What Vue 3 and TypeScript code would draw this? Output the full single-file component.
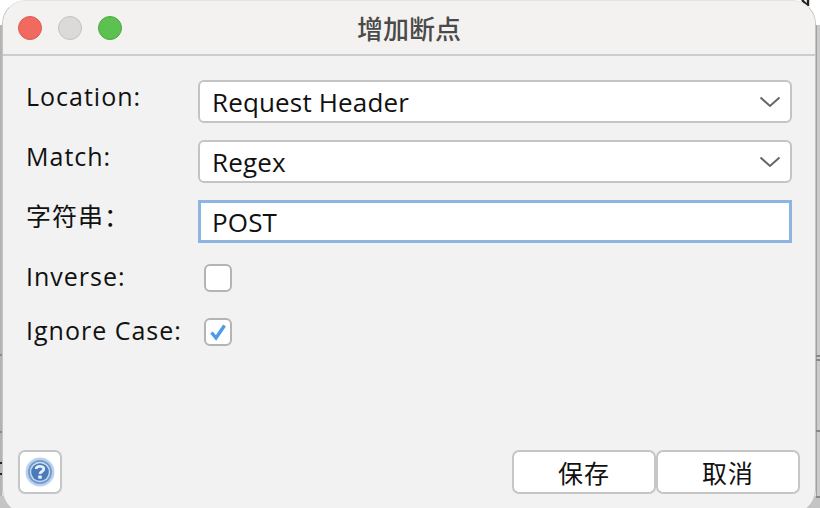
<script setup lang="ts">
const selects = [
  { label: 'Location:', value: 'Request Header' },
  { label: 'Match:', value: 'Regex' },
]
</script>

<template>
  <div class="page">
    <svg class="peek" width="20" height="8" viewBox="0 0 20 8">
      <path d="M2 0 L7 5 M8 0 L8 6" fill="none" stroke="#222" stroke-width="2.4" />
    </svg>
    <div class="window">
      <header class="titlebar">
        <div class="lights">
          <span class="light red"></span>
          <span class="light grey"></span>
          <span class="light green"></span>
        </div>
        <div class="title">增加断点</div>
      </header>
      <main class="body">
        <div class="form">
          <div v-for="s in selects" :key="s.label" class="row">
            <label class="label">{{ s.label }}</label>
            <div class="select">
              <span>{{ s.value }}</span>
              <svg class="chev" width="22" height="12" viewBox="0 0 22 12">
                <path d="M1.5 1.5 L11 10 L20.5 1.5" fill="none" stroke="#666" stroke-width="2" />
              </svg>
            </div>
          </div>
          <div class="row">
            <label class="label">字符串：</label>
            <div class="input">POST</div>
          </div>
          <div class="row check-row first">
            <label class="label">Inverse:</label>
            <span class="check"></span>
          </div>
          <div class="row check-row second">
            <label class="label">Ignore Case:</label>
            <span class="check">
              <svg width="20" height="18" viewBox="0 0 20 18">
                <path d="M3.5 9.5 L8 15 L16.5 2.5" fill="none" stroke="#4a9be8" stroke-width="3.4" />
              </svg>
            </span>
          </div>
        </div>
        <footer class="footer">
          <button class="help" type="button" aria-label="help">
            <svg width="32" height="32" viewBox="0 0 32 32">
              <circle cx="16" cy="16" r="14.5" fill="#bcd2ec" />
              <circle cx="16" cy="16" r="12" fill="#6f9bd0" />
              <circle cx="16" cy="16" r="10.2" fill="#c9dbf0" />
              <circle cx="16" cy="16" r="8.8" fill="#4a7ab8" />
              <path d="M12.2 13 C12.2 9.5 19.8 9.5 19.8 13 C19.8 15.5 16 15.5 16 18" fill="none" stroke="#e6eef8" stroke-width="2.8" />
              <rect x="14.2" y="19.5" width="3.6" height="3.2" fill="#e6eef8" />
            </svg>
          </button>
          <div class="actions">
            <button class="btn" type="button">保存</button>
            <button class="btn" type="button">取消</button>
          </div>
        </footer>
      </main>
    </div>
  </div>
</template>

<style>
html, body { margin: 0; padding: 0; background: #ffffff; }
</style>

<style scoped>
.page {
  position: relative;
  width: 820px;
  height: 508px;
  overflow: hidden;
  background:
    linear-gradient(#222, #222) 0 462px / 3px 2px no-repeat,
    linear-gradient(#222, #222) 0 473px / 3px 2px no-repeat,
    linear-gradient(#8a8a8a, #8a8a8a) 0 354px / 3px 2px no-repeat,
    linear-gradient(#8a8a8a, #8a8a8a) 0 431px / 3px 2px no-repeat,
    linear-gradient(#888, #888) 816px 355px / 4px 2px no-repeat,
    linear-gradient(#888, #888) 816px 359px / 4px 2px no-repeat,
    linear-gradient(#888, #888) 816px 430px / 4px 2px no-repeat,
    linear-gradient(#888, #888) 816px 496px / 4px 2px no-repeat,
    linear-gradient(#c4c4c4, #c4c4c4) 0 496px / 820px 12px no-repeat,
    linear-gradient(90deg, #a0a0a0 1px, #cbcbcb 1px) 816px 25px / 4px 483px no-repeat,
    linear-gradient(#b4b4b4, #b4b4b4) 0 25px / 2px 483px no-repeat,
    #fff;
  font-family: "Open Sans", "Noto Sans", "Noto Sans CJK SC", sans-serif;
  color: #111;
}
.peek {
  position: absolute;
  right: 0;
  top: 0;
}
.window {
  position: relative;
  box-sizing: border-box;
  width: 814px;
  height: 514px;
  margin-left: 2px;
  border: 1px solid #c4c4c4;
  border-top-color: #e2e2e2;
  border-radius: 24px;
  background: #f2f2f2;
  overflow: hidden;
  display: flex;
  flex-direction: column;
}
.titlebar {
  position: relative;
  flex: none;
  height: 55px;
  box-sizing: border-box;
  background: #f3f2f1;
  border-bottom: 2px solid #cdcdcd;
  display: flex;
  align-items: center;
  justify-content: center;
}
.lights {
  position: absolute;
  left: 15px;
  top: 15px;
  display: flex;
  gap: 16px;
}
.light {
  box-sizing: border-box;
  width: 24px;
  height: 24px;
  border-radius: 50%;
  border: 1px solid;
}
.red { background: #f16a60; border-color: #de5a50; }
.grey { background: #dbdad8; border-color: #c2c1bf; }
.green { background: #5cc150; border-color: #4aa942; }
.title {
  font-size: 26px;
  line-height: 1;
  font-weight: 500;
  color: #4a4a4a;
  font-family: "Noto Sans CJK SC", sans-serif;
}
.body {
  flex: 1;
  display: flex;
  flex-direction: column;
  justify-content: space-between;
  padding: 24px 15px 19px;
  min-height: 0;
}
.form { display: flex; flex-direction: column; }
.row {
  display: flex;
  align-items: flex-start;
  height: 43px;
  margin-bottom: 17px;
}
.label {
  width: 172px;
  padding-left: 8px;
  flex: none;
  font-size: 25px;
  letter-spacing: 1px;
  line-height: 32px;
}
.select, .input {
  box-sizing: border-box;
  width: 594px;
  height: 43px;
  background: #fff;
  font-size: 26px;
  letter-spacing: 0.15px;
  display: flex;
  align-items: center;
  padding-left: 12px;
}
.select {
  justify-content: space-between;
  border: 2px solid #c4c4c4;
  border-radius: 6px;
  padding-right: 9px;
}
.input {
  border: 3px solid #8db4e2;
  padding-left: 11px;
}
.check-row { height: 28px; margin-bottom: 0; }
.check-row .label { margin-top: -4px; }
.first { margin-top: 4px; margin-bottom: 26px; }
.check {
  box-sizing: border-box;
  width: 28px;
  height: 28px;
  margin-left: 6px;
  background: #fff;
  border: 2px solid #b4b4b4;
  border-radius: 6px;
  display: flex;
  align-items: center;
  justify-content: center;
}
.footer {
  display: flex;
  justify-content: space-between;
  align-items: center;
}
.help {
  box-sizing: border-box;
  width: 44px;
  height: 44px;
  padding: 0;
  background: #fff;
  border: 2px solid #c6c6c6;
  border-radius: 7px;
  display: flex;
  align-items: center;
  justify-content: center;
}
.actions { display: flex; }
.btn {
  box-sizing: border-box;
  width: 144px;
  height: 44px;
  padding: 0;
  background: #fff;
  border: 2px solid #c6c6c6;
  border-radius: 7px;
  font-size: 25px;
  letter-spacing: 1px;
  font-family: "Noto Sans CJK SC", sans-serif;
  color: #111;
}
</style>
